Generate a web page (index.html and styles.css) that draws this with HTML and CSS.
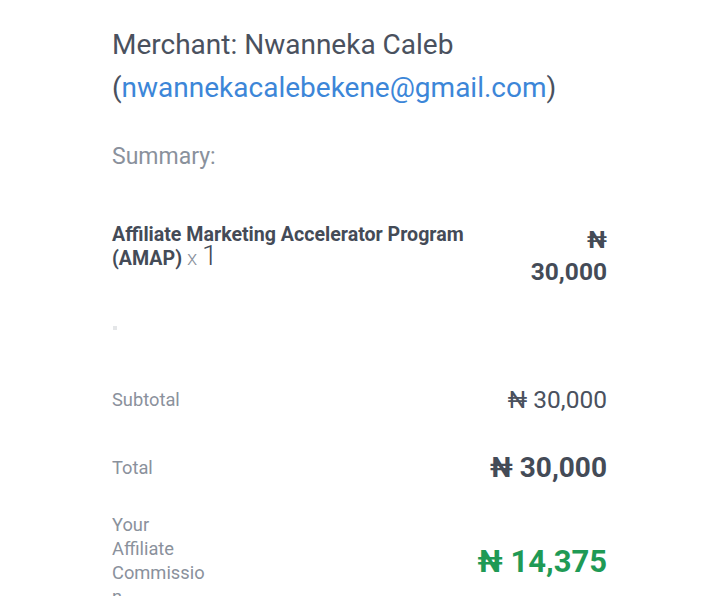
FILE: index.html
```html
<!DOCTYPE html>
<html>
<head>
<meta charset="utf-8">
<link rel="stylesheet" href="styles.css">
</head>
<body>
<div class="page">
  <p class="merchant">Merchant: Nwanneka Caleb (<a class="mail" href="#">nwannekacalebekene@gmail.com</a>)</p>
  <p class="summary">Summary:</p>
  <div class="item">
    <div class="item-name">Affiliate Marketing Accelerator Program (AMAP) <span class="qty-x">x</span> <span class="qty">1</span></div>
    <div class="item-price">₦ 30,000</div>
  </div>
  <div class="thumb"></div>
  <div class="row subtotal">
    <div class="label">Subtotal</div>
    <div class="val">₦ 30,000</div>
  </div>
  <div class="row total">
    <div class="label">Total</div>
    <div class="val">₦ 30,000</div>
  </div>
  <div class="row commission">
    <div class="label narrow">Your Affiliate Commission</div>
    <div class="val">₦ 14,375</div>
  </div>
</div>
</body>
</html>
```
FILE: styles.css
```css
html, body {
  margin: 0;
  padding: 0;
  background: #ffffff;
}
body {
  font-family: Roboto, "Noto Sans", sans-serif;
  color: #4a515e;
}
.page {
  width: 495px;
  padding: 23px 0 0 112px;
}
.merchant {
  margin: 0;
  font-size: 28px;
  line-height: 43px;
  color: #4a515e;
}
.mail {
  color: #3c86d8;
  text-decoration: none;
}
.summary {
  margin: 33px 0 0;
  font-size: 23px;
  line-height: 30px;
  color: #8a919c;
}
.item {
  display: flex;
  justify-content: space-between;
  margin-top: 52px;
}
.item-name {
  width: 370px;
  font-size: 19.6px;
  font-weight: 700;
  line-height: 22px;
  color: #444b57;
}
.qty-x {
  font-weight: 300;
  color: #8a919c;
  font-size: 21px;
  line-height: 20px;
}
.qty {
  font-weight: 300;
  font-size: 28px;
  line-height: 20px;
  color: #444b57;
}
.item-price {
  width: 90px;
  text-align: right;
  font-size: 24.5px;
  font-weight: 700;
  line-height: 32px;
  color: #444b57;
}
.thumb {
  width: 4px;
  height: 4px;
  background: #e4e6e8;
  margin: 38px 0 0 1px;
}
.row {
  display: flex;
  justify-content: space-between;
  align-items: center;
}
.label {
  font-size: 18.3px;
  line-height: 24px;
  color: #8a919c;
}
.narrow {
  width: 96px;
  overflow-wrap: break-word;
}
.subtotal {
  margin-top: 55px;
}
.subtotal .val {
  font-size: 24.5px;
  color: #4a515e;
}
.total {
  margin-top: 37px;
}
.total .val {
  font-size: 28px;
  font-weight: 700;
  color: #444b57;
}
.commission {
  margin-top: 29px;
}
.commission .val {
  font-size: 31px;
  font-weight: 700;
  color: #1f9a55;
}
```
